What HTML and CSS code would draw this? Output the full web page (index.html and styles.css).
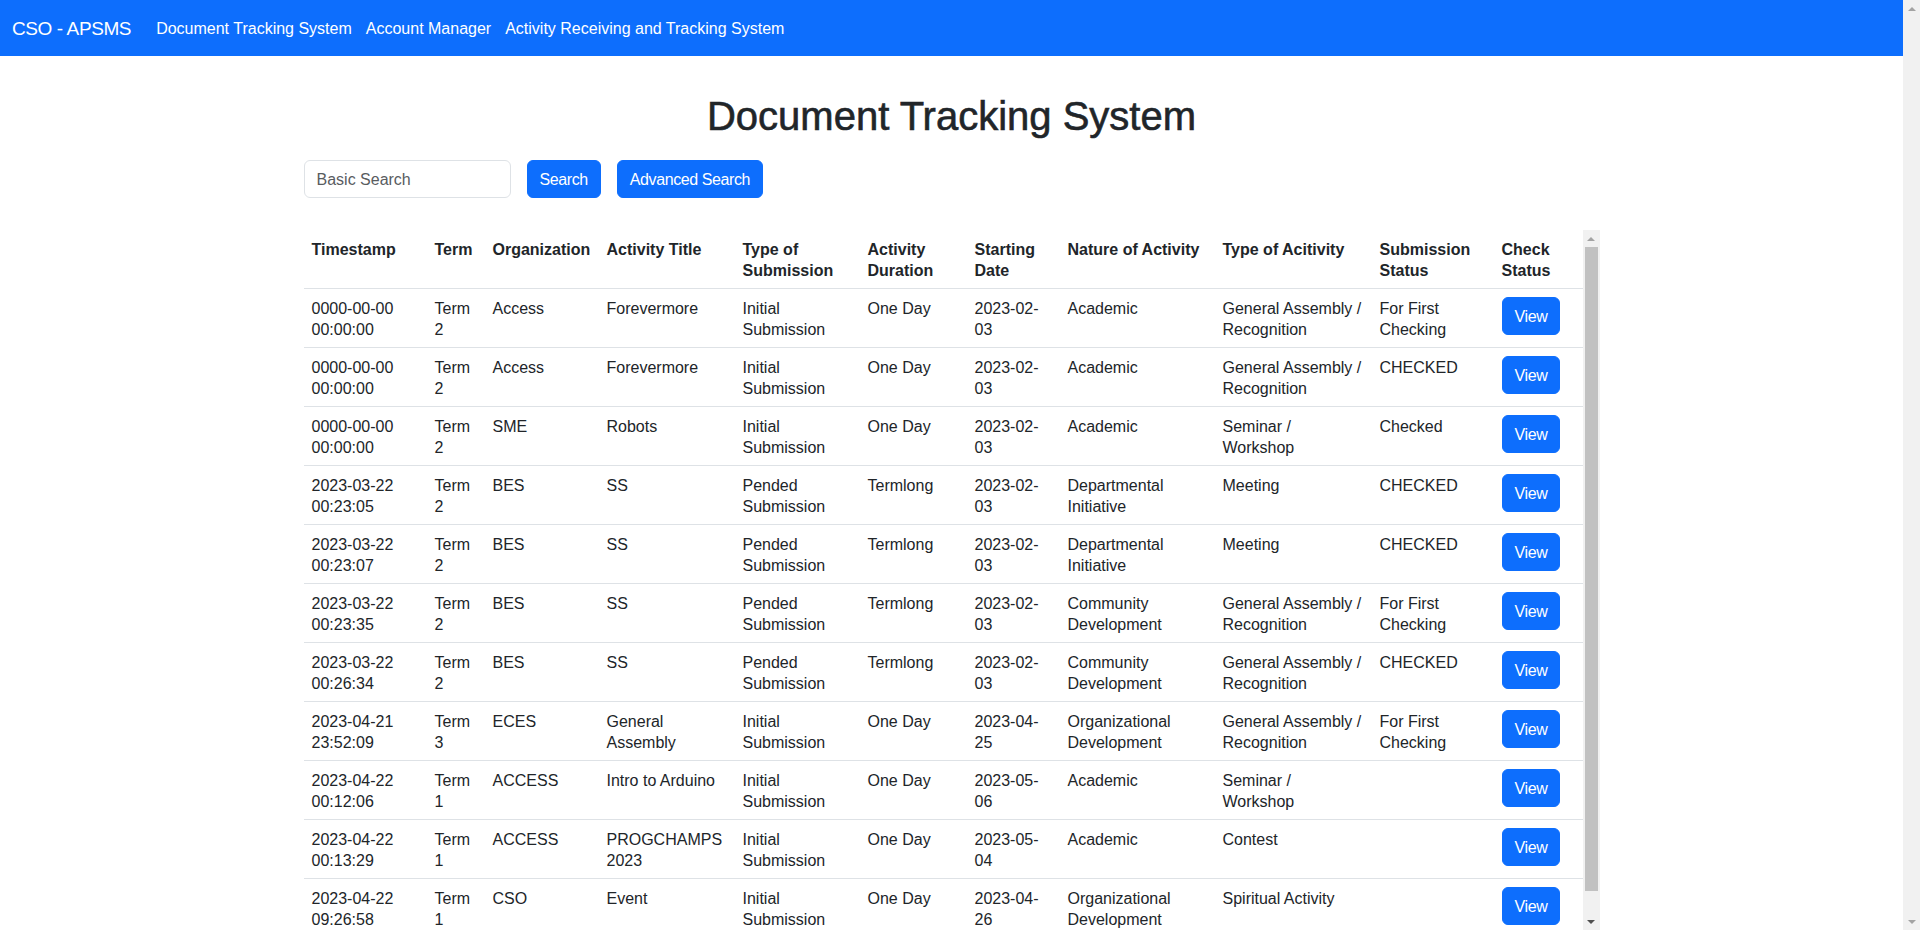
FILE: index.html
```html
<!DOCTYPE html>
<html lang="en">
<head>
<meta charset="utf-8">
<title>Document Tracking System</title>
<link rel="stylesheet" href="styles.css">
</head>
<body>
<div class="page">
  <div class="main">
    <nav class="navbar">
      <a class="brand" href="#">CSO - APSMS</a>
      <ul class="nav">
        <li><a class="nav-link" href="#">Document Tracking System</a></li>
        <li><a class="nav-link" href="#">Account Manager</a></li>
        <li><a class="nav-link" href="#">Activity Receiving and Tracking System</a></li>
      </ul>
    </nav>
    <div class="container">
      <h1 class="title">Document Tracking System</h1>
      <form class="search-row">
        <input class="search-input" type="text" placeholder="Basic Search">
        <button class="btn" type="button">Search</button>
        <button class="btn" type="button">Advanced Search</button>
      </form>
      <div class="table-wrap">
        <div class="table-viewport">
          <table class="data-table">
            <colgroup>
              <col class="c-ts"><col class="c-term"><col class="c-org"><col class="c-title"><col class="c-type"><col class="c-dur"><col class="c-date"><col class="c-nature"><col class="c-kind"><col class="c-status"><col class="c-check">
            </colgroup>
            <thead>
              <tr>
                <th>Timestamp</th><th>Term</th><th>Organization</th><th>Activity Title</th><th>Type of Submission</th><th>Activity Duration</th><th>Starting Date</th><th>Nature of Activity</th><th>Type of Acitivity</th><th>Submission Status</th><th>Check Status</th>
              </tr>
            </thead>
            <tbody>
              <tr><td>0000-00-00 00:00:00</td><td>Term 2</td><td>Access</td><td>Forevermore</td><td>Initial Submission</td><td>One Day</td><td>2023-02-03</td><td>Academic</td><td>General Assembly / Recognition</td><td>For First Checking</td><td class="cell-action"><button class="btn btn-view" type="button">View</button></td></tr>
              <tr><td>0000-00-00 00:00:00</td><td>Term 2</td><td>Access</td><td>Forevermore</td><td>Initial Submission</td><td>One Day</td><td>2023-02-03</td><td>Academic</td><td>General Assembly / Recognition</td><td>CHECKED</td><td class="cell-action"><button class="btn btn-view" type="button">View</button></td></tr>
              <tr><td>0000-00-00 00:00:00</td><td>Term 2</td><td>SME</td><td>Robots</td><td>Initial Submission</td><td>One Day</td><td>2023-02-03</td><td>Academic</td><td>Seminar / Workshop</td><td>Checked</td><td class="cell-action"><button class="btn btn-view" type="button">View</button></td></tr>
              <tr><td>2023-03-22 00:23:05</td><td>Term 2</td><td>BES</td><td>SS</td><td>Pended Submission</td><td>Termlong</td><td>2023-02-03</td><td>Departmental Initiative</td><td>Meeting</td><td>CHECKED</td><td class="cell-action"><button class="btn btn-view" type="button">View</button></td></tr>
              <tr><td>2023-03-22 00:23:07</td><td>Term 2</td><td>BES</td><td>SS</td><td>Pended Submission</td><td>Termlong</td><td>2023-02-03</td><td>Departmental Initiative</td><td>Meeting</td><td>CHECKED</td><td class="cell-action"><button class="btn btn-view" type="button">View</button></td></tr>
              <tr><td>2023-03-22 00:23:35</td><td>Term 2</td><td>BES</td><td>SS</td><td>Pended Submission</td><td>Termlong</td><td>2023-02-03</td><td>Community Development</td><td>General Assembly / Recognition</td><td>For First Checking</td><td class="cell-action"><button class="btn btn-view" type="button">View</button></td></tr>
              <tr><td>2023-03-22 00:26:34</td><td>Term 2</td><td>BES</td><td>SS</td><td>Pended Submission</td><td>Termlong</td><td>2023-02-03</td><td>Community Development</td><td>General Assembly / Recognition</td><td>CHECKED</td><td class="cell-action"><button class="btn btn-view" type="button">View</button></td></tr>
              <tr><td>2023-04-21 23:52:09</td><td>Term 3</td><td>ECES</td><td>General Assembly</td><td>Initial Submission</td><td>One Day</td><td>2023-04-25</td><td>Organizational Development</td><td>General Assembly / Recognition</td><td>For First Checking</td><td class="cell-action"><button class="btn btn-view" type="button">View</button></td></tr>
              <tr><td>2023-04-22 00:12:06</td><td>Term 1</td><td>ACCESS</td><td>Intro to Arduino</td><td>Initial Submission</td><td>One Day</td><td>2023-05-06</td><td>Academic</td><td>Seminar / Workshop</td><td></td><td class="cell-action"><button class="btn btn-view" type="button">View</button></td></tr>
              <tr><td>2023-04-22 00:13:29</td><td>Term 1</td><td>ACCESS</td><td>PROGCHAMPS 2023</td><td>Initial Submission</td><td>One Day</td><td>2023-05-04</td><td>Academic</td><td>Contest</td><td></td><td class="cell-action"><button class="btn btn-view" type="button">View</button></td></tr>
              <tr><td>2023-04-22 09:26:58</td><td>Term 1</td><td>CSO</td><td>Event</td><td>Initial Submission</td><td>One Day</td><td>2023-04-26</td><td>Organizational Development</td><td>Spiritual Activity</td><td></td><td class="cell-action"><button class="btn btn-view" type="button">View</button></td></tr>
            </tbody>
          </table>
        </div>
        <div class="vscroll">
          <div class="sb-btn sb-up"></div>
          <div class="sb-track"><div class="sb-thumb"></div></div>
          <div class="sb-btn sb-down sb-active"></div>
        </div>
      </div>
    </div>
  </div>
  <div class="vscroll page-scroll">
    <div class="sb-btn sb-up"></div>
    <div class="sb-track"></div>
    <div class="sb-btn sb-down"></div>
  </div>
</div>
</body>
</html>
```

FILE: styles.css
```css
html, body {
  margin: 0;
  padding: 0;
  overflow: hidden;
}

body {
  font-family: "Liberation Sans", Arial, sans-serif;
  font-size: 16px;
  line-height: 1.5;
  color: #212529;
  background: #fff;
}

.page {
  display: flex;
  height: 930px;
}

.main {
  flex: 1 1 auto;
  min-width: 0;
}

/* Navbar */
.navbar {
  display: flex;
  align-items: center;
  height: 56px;
  box-sizing: border-box;
  padding: 2px 12px 0;
  background: #0d6efd;
}

.brand {
  font-size: 19px;
  line-height: 30px;
  color: #fff;
  text-decoration: none;
  letter-spacing: -0.4px;
  margin-right: 18px;
}

.nav {
  display: flex;
  list-style: none;
  margin: 0;
  padding: 0;
}

.nav-link {
  display: block;
  padding: 8px 7px;
  color: #fff;
  text-decoration: none;
}

/* Content */
.container {
  width: 1320px;
  box-sizing: border-box;
  padding: 0 12px;
  margin: 0 auto;
}

.title {
  font-size: 40px;
  line-height: 48px;
  font-weight: 500;
  -webkit-text-stroke: 0.6px #212529;
  text-align: center;
  margin: 36px 0 20px;
}

.search-row {
  display: flex;
  gap: 16px;
  margin: 0 0 32px;
}

.search-input {
  width: 207px;
  height: 38px;
  box-sizing: border-box;
  padding: 7px 12px 5px;
  border: 1px solid #dee2e6;
  border-radius: 6px;
  font: inherit;
  color: #212529;
  outline: none;
}

.search-input::placeholder {
  color: #595c5f;
}

.btn {
  height: 38px;
  box-sizing: border-box;
  padding: 7px 12px 5px;
  border: 1px solid #0d6efd;
  border-radius: 6px;
  background: #0d6efd;
  color: #fff;
  font: inherit;
  line-height: 24px;
  letter-spacing: -0.4px;
}

.btn-view {
  display: inline-block;
  vertical-align: top;
}

/* Table */
.table-wrap {
  display: flex;
  height: 700px;
}

.table-viewport {
  flex: 1 1 auto;
  min-width: 0;
  overflow: hidden;
}

.data-table {
  width: 100%;
  table-layout: fixed;
  border-collapse: collapse;
  margin-bottom: 16px;
  line-height: 21px;
}

.data-table th,
.data-table td {
  padding: 9px 8px 7px;
  border-bottom: 1px solid #dee2e6;
  text-align: left;
  vertical-align: top;
}

.data-table td.cell-action {
  padding: 8px;
}

.data-table th {
  font-weight: 700;
}

.c-ts { width: 123px; }
.c-term { width: 58px; }
.c-org { width: 114px; }
.c-title { width: 136px; }
.c-type { width: 125px; }
.c-dur { width: 107px; }
.c-date { width: 93px; }
.c-nature { width: 155px; }
.c-kind { width: 157px; }
.c-status { width: 122px; }
.c-check { width: 89px; }

/* Scrollbars */
.vscroll {
  flex: 0 0 17px;
  width: 17px;
  display: flex;
  flex-direction: column;
  background: #f1f1f1;
}

.sb-btn {
  flex: 0 0 17px;
  display: flex;
  align-items: center;
  justify-content: center;
}

.sb-btn::after {
  content: "";
  width: 0;
  height: 0;
  border-left: 4px solid transparent;
  border-right: 4px solid transparent;
}

.sb-up::after {
  border-bottom: 4px solid #a3a3a3;
}

.sb-down::after {
  border-top: 4px solid #a3a3a3;
}

.sb-down.sb-active::after {
  border-top-color: #505050;
}

.sb-track {
  flex: 1 1 auto;
  padding: 0 2px;
}

.sb-thumb {
  height: 644px;
  background: #c1c1c1;
}

.page-scroll {
  height: 930px;
}
```
